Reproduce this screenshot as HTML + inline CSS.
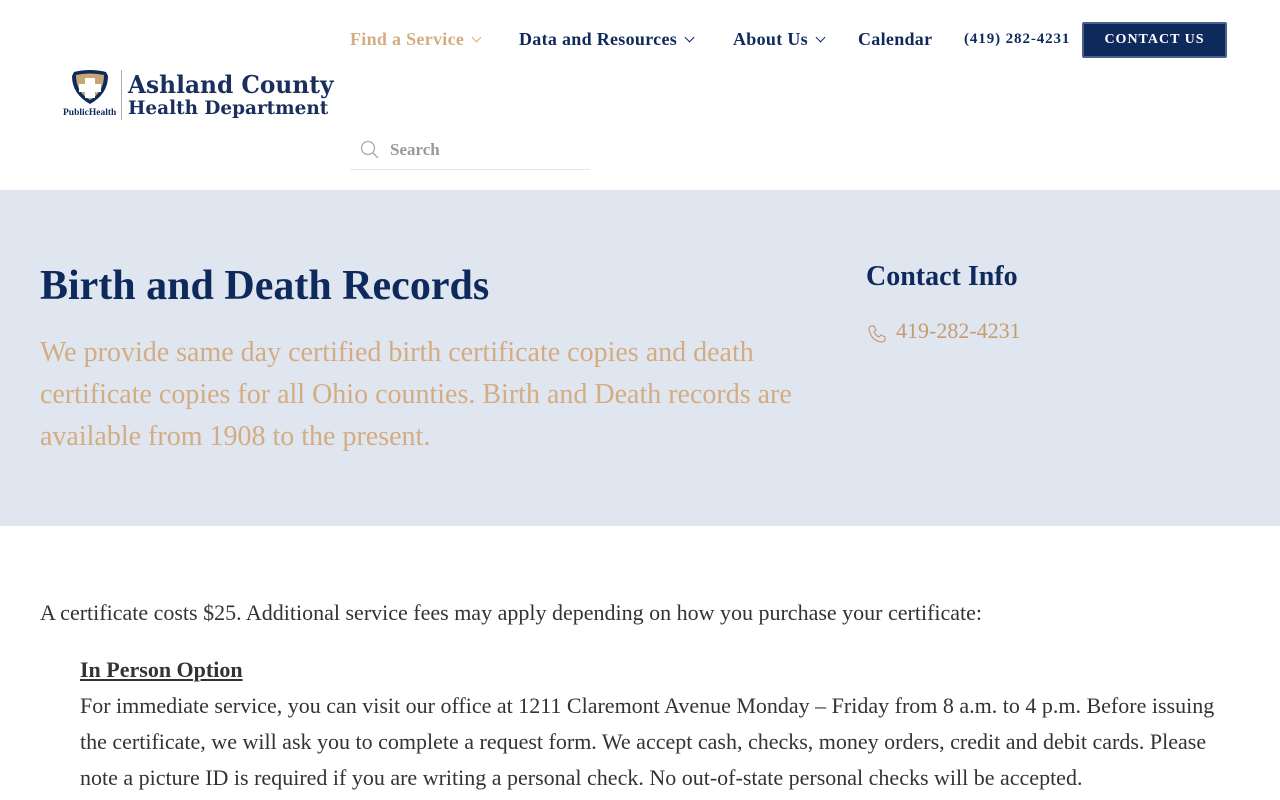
<!DOCTYPE html>
<html><head><meta charset="utf-8"><style>
*{margin:0;padding:0;box-sizing:border-box}
body{width:1280px;height:800px;overflow:hidden;background:#fff;font-family:"Liberation Serif",serif;color:#333}
.nav{position:absolute;top:29px;font-size:18px;font-weight:bold;color:#0e2a5c;letter-spacing:0.3px;white-space:nowrap}
.chev{display:inline-block;width:7px;height:7px;border-right:1.5px solid currentColor;border-bottom:1.5px solid currentColor;transform:rotate(45deg);margin-left:9px;position:relative;top:-4px}
.btn{position:absolute;left:1082px;top:22px;width:145px;height:36px;background:#0e2a5c;border:2px solid #4b6187;color:#fff;font-weight:bold;font-size:14px;letter-spacing:1px;text-align:center;line-height:32px;border-radius:2px}
.hero{position:absolute;top:190px;left:0;width:1280px;height:336px;background:#e0e6ef}
h1{position:absolute;left:40px;top:262px;font-size:42px;color:#0e2a5c;font-weight:bold}
.lead{position:absolute;left:40px;top:332px;width:800px;font-size:28px;line-height:42px;color:#d4ac82}
h2{position:absolute;left:866px;top:261px;font-size:28px;color:#0e2a5c;font-weight:bold}
.ph{position:absolute;left:896px;top:318px;font-size:23px;color:#c59c72}
.p{position:absolute;font-size:22px;color:#333;white-space:nowrap}
.lt{position:absolute;left:66px;font-weight:bold;color:#1b2f5e;font-family:'DejaVu Serif','Liberation Serif',serif;white-space:nowrap;transform-origin:left}
</style></head><body>
<div style="position:absolute;left:62px;top:70px;width:266px;height:52px">
<svg width="60" height="52" viewBox="0 0 60 52" style="position:absolute;left:0;top:0">
<path d="M12 2 Q28 -2 44 2 L46 6 Q46 24 28 34 Q10 24 10 6Z" fill="#0e2a5c"/>
<path d="M14 5 Q28 2 42 5 Q42 22 28 30 Q14 22 14 5Z" fill="#c8a676"/>
<path d="M23 8h10v6h6v8h-6v6h-10v-6h-6v-8h6z" fill="#fff"/>
<text x="1" y="45" font-family="Liberation Serif" font-weight="bold" font-size="9.5" fill="#0e2a5c">PublicHealth</text>
</svg>
<div style="position:absolute;left:59px;top:0;width:1px;height:50px;background:#aaa"></div>
<div class="lt" style="top:2px;font-size:24px;line-height:26px;transform:scaleX(0.97)">Ashland County</div>
<div class="lt" style="top:27px;font-size:19px;line-height:22px;transform:scaleX(0.97)">Health Department</div>
</div>
<div class="nav" style="left:350px;color:#d4ac82">Find a Service<span class="chev"></span></div>
<div class="nav" style="left:519px">Data and Resources<span class="chev"></span></div>
<div class="nav" style="left:733px">About Us<span class="chev"></span></div>
<div class="nav" style="left:858px">Calendar</div>
<div class="nav" style="left:964px;font-size:15px;top:31px;letter-spacing:0.9px">(419) 282-4231</div>
<div class="btn">CONTACT US</div>
<div style="position:absolute;left:350px;top:128px;width:240px;height:42px;border-bottom:1px solid #e5e5e5">
<svg width="20" height="20" style="position:absolute;left:10px;top:12px" viewBox="0 0 20 20"><circle cx="8" cy="8" r="6.5" fill="none" stroke="#aaa" stroke-width="1.3"/><path d="M13 13l5 5" stroke="#aaa" stroke-width="1.3"/></svg>
<span style="position:absolute;left:40px;top:12px;font-size:17px;color:#999;font-weight:bold">Search</span></div>
<div class="hero"></div>
<h1>Birth and Death Records</h1>
<div class="lead">We provide same day certified birth certificate copies and death certificate copies for all Ohio counties. Birth and Death records are available from 1908 to the present.</div>
<h2>Contact Info</h2>
<svg width="20" height="20" viewBox="0 0 20 20" style="position:absolute;left:867px;top:324px"><path d="M4 2l3 0 2 4-2 2q2 4 5 5l2-2 4 2v3q-1 2-3 2Q4 17 2 5q0-2 2-3z" fill="none" stroke="#c59c72" stroke-width="1.2"/></svg>
<div class="ph" style="font-size:22px">419-282-4231</div>
<div class="p" style="left:40px;top:600px">A certificate costs $25. Additional service fees may apply depending on how you purchase your certificate:</div>
<div class="p" style="left:80px;top:657px;font-weight:bold;text-decoration:underline">In Person Option</div>
<div class="p" style="left:80px;top:688px;line-height:36px">For immediate service, you can visit our office at 1211 Claremont Avenue Monday – Friday from 8 a.m. to 4 p.m. Before issuing<br>the certificate, we will ask you to complete a request form. We accept cash, checks, money orders, credit and debit cards. Please<br>note a picture ID is required if you are writing a personal check. No out-of-state personal checks will be accepted.</div>
</body></html>
